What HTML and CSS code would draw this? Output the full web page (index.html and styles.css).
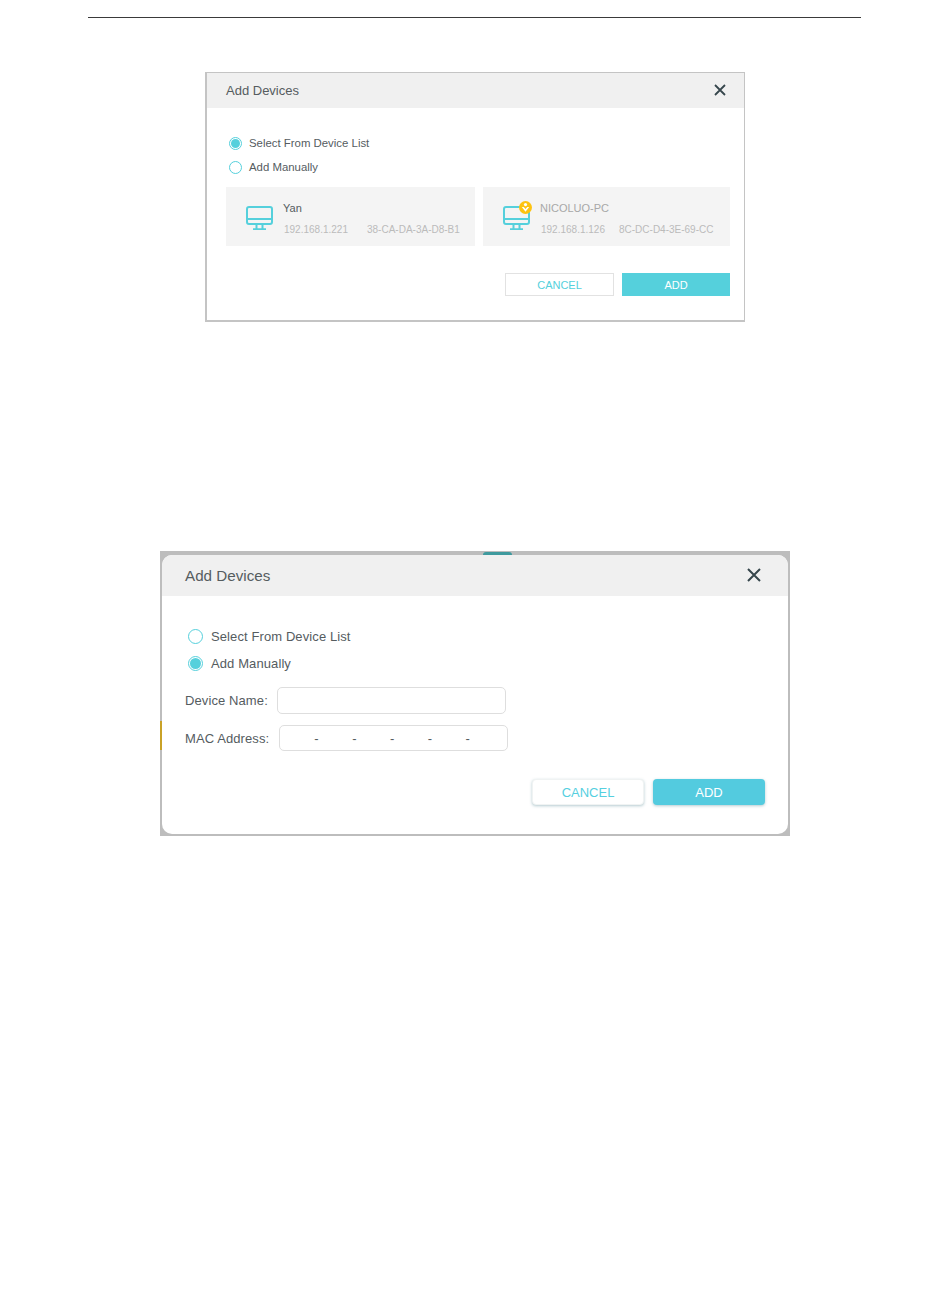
FILE: index.html
```html
<!DOCTYPE html>
<html lang="en">
  <head>
    <meta charset="UTF-8" />
    <title>Add Devices</title>
    <link rel="stylesheet" href="styles.css">
  </head>

  <body>
    <div class="page-rule"></div>

    <div class="shot shot-list">
      <div class="shot-head">
        <span class="shot-title">Add Devices</span>
        <svg class="close" viewBox="0 0 12 12"><path d="M1 1 L11 11 M11 1 L1 11" /></svg>
      </div>
      <div class="shot-body">
        <div class="radio-row">
          <span class="radio checked"></span>
          <span>Select From Device List</span>
        </div>
        <div class="radio-row">
          <span class="radio"></span>
          <span>Add Manually</span>
        </div>

        <div class="cards">
          <div class="card card-wide">
            <svg class="monitor" viewBox="0 0 27 24">
              <rect x="1" y="1" width="25" height="17" rx="2" />
              <path d="M1 13 H26 M10.5 18 V23 M16.5 18 V23 M7 23.2 H20" />
            </svg>
            <div class="card-text">
              <div class="card-name">Yan</div>
              <div class="card-meta">
                <span class="card-ip">192.168.1.221</span>
                <span>38-CA-DA-3A-D8-B1</span>
              </div>
            </div>
          </div>
          <div class="card card-narrow">
            <div class="monitor-wrap">
              <svg class="monitor" viewBox="0 0 27 24">
                <rect x="1" y="1" width="25" height="17" rx="2" />
                <path d="M1 13 H26 M10.5 18 V23 M16.5 18 V23 M7 23.2 H20" />
              </svg>
              <svg class="badge" viewBox="0 0 13 13">
                <circle cx="6.5" cy="6.5" r="6.5" fill="#fdc311" />
                <circle cx="6.5" cy="3.6" r="1.6" fill="#fff" />
                <path d="M2.8 6 L6.5 10.8 L10.2 6 L8.3 6 L6.5 8 L4.7 6 Z" fill="#fff" />
              </svg>
            </div>
            <div class="card-text">
              <div class="card-name muted">NICOLUO-PC</div>
              <div class="card-meta">
                <span class="card-ip short">192.168.1.126</span>
                <span>8C-DC-D4-3E-69-CC</span>
              </div>
            </div>
          </div>
        </div>

        <div class="actions">
          <button class="btn btn-cancel">CANCEL</button>
          <button class="btn btn-add">ADD</button>
        </div>
      </div>
    </div>

    <div class="shot-back">
      <div class="back-blob"></div>
      <div class="back-strip"></div>
      <div class="dialog">
        <div class="dialog-head">
          <span class="dialog-title">Add Devices</span>
          <svg class="dialog-close" viewBox="0 0 14 14"><path d="M1 1 L13 13 M13 1 L1 13" /></svg>
        </div>
        <div class="dialog-body">
          <div class="dialog-radio">
            <span class="radio big"></span>
            <span>Select From Device List</span>
          </div>
          <div class="dialog-radio">
            <span class="radio big checked"></span>
            <span>Add Manually</span>
          </div>

          <div class="field field-name">
            <label>Device Name:</label>
            <div class="input"></div>
          </div>
          <div class="field field-mac">
            <label>MAC Address:</label>
            <div class="input mac">
              <span>-</span><span>-</span><span>-</span><span>-</span><span>-</span>
            </div>
          </div>

          <div class="dialog-actions">
            <button class="dbtn dbtn-cancel">CANCEL</button>
            <button class="dbtn dbtn-add">ADD</button>
          </div>
        </div>
      </div>
    </div>
  </body>
</html>
```

FILE: styles.css
```css
* {
  margin: 0;
  padding: 0;
  box-sizing: border-box;
}

body {
  background-color: #fff;
  font-family: "Liberation Sans", Arial, sans-serif;
  color: #555c5f;
}

button {
  font-family: "Liberation Sans", Arial, sans-serif;
}

.page-rule {
  height: 1px;
  margin: 17px 89px 0 88px;
  background-color: #3a3a3a;
}

/* first picture, square corners */
.shot {
  width: 540px;
  height: 250px;
  margin: 54px auto 0;
  border-style: solid;
  border-color: #c4c4c4;
  border-width: 1px 1px 2px 2px;
}

.shot-head {
  height: 35px;
  padding: 0 18px 0 19px;
  background-color: #f0f0f0;
  display: flex;
  align-items: center;
  justify-content: space-between;
}

.shot-title {
  font-size: 13px;
}

.close {
  width: 12px;
  height: 12px;
  margin-top: -1px;
}

.close path {
  stroke: #36464c;
  stroke-width: 1.8;
  fill: none;
}

.shot-body {
  padding: 23px 14px 0 19px;
}

.radio-row {
  height: 24px;
  display: flex;
  align-items: center;
  gap: 7px;
  padding-left: 3px;
  font-size: 11.4px;
}

.radio {
  width: 13px;
  height: 13px;
  border: 1px solid #55d0dc;
  border-radius: 50%;
  background-color: #fff;
  flex-shrink: 0;
  display: flex;
  align-items: center;
  justify-content: center;
}

.radio.checked::after {
  content: "";
  width: 9px;
  height: 9px;
  border-radius: 50%;
  background-color: #55d0dc;
}

.radio.big {
  width: 15px;
  height: 15px;
}

.radio.big.checked::after {
  width: 11px;
  height: 11px;
}

.cards {
  margin-top: 8px;
  display: flex;
  gap: 8px;
}

.card {
  height: 59px;
  background-color: #f4f4f4;
  padding: 19px 0 0 20px;
  display: flex;
}

.card-wide {
  width: 249px;
}

.card-narrow {
  width: 247px;
}

.monitor {
  width: 27px;
  height: 24px;
  flex-shrink: 0;
  display: block;
}

.monitor rect,
.monitor path {
  fill: none;
  stroke: #55d0dc;
  stroke-width: 2;
}

.monitor-wrap {
  position: relative;
  width: 27px;
  height: 24px;
}

.badge {
  position: absolute;
  top: -5px;
  left: 16px;
  width: 13px;
  height: 13px;
}

.card-text {
  margin-left: 10px;
  margin-top: -5px;
}

.card-name {
  font-size: 11px;
  line-height: 14px;
  color: #555c5f;
}

.card-name.muted {
  color: #a8a8a8;
}

.card-meta {
  margin-top: 9px;
  margin-left: 1px;
  font-size: 10px;
  line-height: 12px;
  color: #bbb;
  display: flex;
  white-space: nowrap;
}

.card-ip {
  width: 83px;
}

.card-ip.short {
  width: 78px;
}

.actions {
  margin-top: 27px;
  display: flex;
  justify-content: flex-end;
  gap: 8px;
}

.btn {
  height: 23px;
  font-size: 11px;
  cursor: pointer;
}

.btn-cancel {
  width: 109px;
  border: 1px solid #e2e2e2;
  background-color: #fff;
  color: #55d0dc;
}

.btn-add {
  width: 108px;
  border: none;
  background-color: #55d0dc;
  color: #fff;
}

/* second picture, dialog over a grey backdrop */
.shot-back {
  position: relative;
  width: 630px;
  height: 285px;
  margin: 229px auto 0;
  padding: 4px 2px 2px;
  background-color: #bdbdbd;
}

.back-blob {
  position: absolute;
  top: 1px;
  left: 323px;
  width: 29px;
  height: 3px;
  border-radius: 6px 6px 0 0;
  background-color: #3f9a9e;
}

.back-strip {
  position: absolute;
  top: 170px;
  left: 0;
  width: 2px;
  height: 29px;
  background-color: #c9a227;
}

.dialog {
  height: 100%;
  background-color: #fff;
  border-radius: 10px;
  overflow: hidden;
}

.dialog-head {
  height: 41px;
  padding: 0 27px 0 23px;
  background-color: #f0f0f0;
  display: flex;
  align-items: center;
  justify-content: space-between;
}

.dialog-title {
  font-size: 15.2px;
}

.dialog-close {
  width: 14px;
  height: 14px;
  margin-top: -1px;
}

.dialog-close path {
  stroke: #36464c;
  stroke-width: 2;
  fill: none;
}

.dialog-body {
  padding: 27px 23px 0;
}

.dialog-radio {
  height: 27px;
  padding-left: 3px;
  display: flex;
  align-items: center;
  gap: 8px;
  font-size: 13px;
  letter-spacing: 0.1px;
}

.field {
  display: flex;
  align-items: center;
  font-size: 13px;
  letter-spacing: 0.1px;
}

.field-name {
  margin-top: 10px;
  gap: 9px;
}

.field-mac {
  margin-top: 11px;
  gap: 10px;
}

.input {
  width: 229px;
  height: 27px;
  border: 1px solid #dedede;
  border-radius: 5px;
  background-color: #fff;
}

.input.mac {
  height: 26px;
  padding-left: 34px;
  display: flex;
  align-items: center;
  gap: 33.4px;
}

.dialog-actions {
  margin-top: 28px;
  display: flex;
  justify-content: flex-end;
  gap: 9px;
}

.dbtn {
  width: 112px;
  height: 26px;
  border: none;
  border-radius: 4px;
  font-size: 13px;
  cursor: pointer;
}

.dbtn-cancel {
  background-color: #fff;
  color: #55cfdf;
  border: 1px solid #f0f3f3;
  box-shadow: 0 1px 3px rgba(90, 140, 150, 0.45);
}

.dbtn-add {
  background-color: #53cbdf;
  color: #fff;
  box-shadow: 0 1px 3px rgba(90, 140, 150, 0.45);
}
```
